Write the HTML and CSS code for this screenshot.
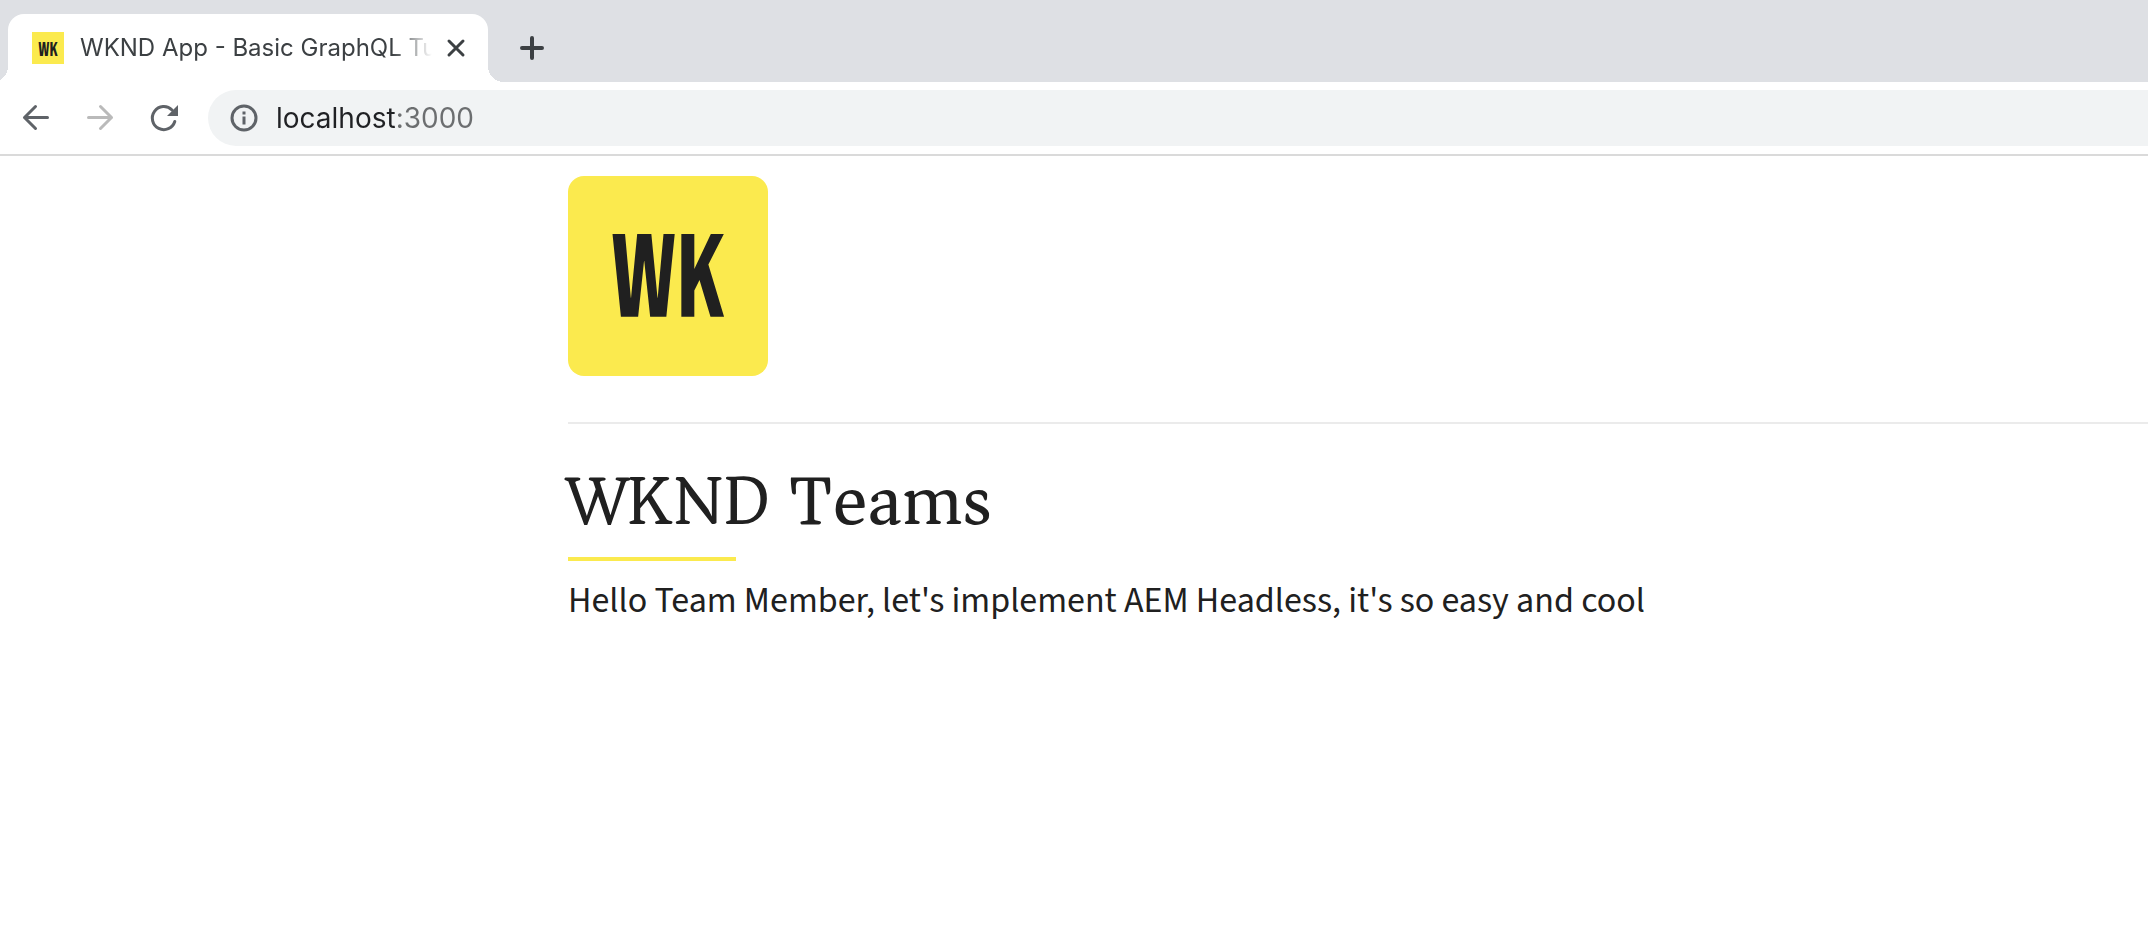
FILE: index.html
```html
<!DOCTYPE html>
<html lang="en">
<head>
<meta charset="utf-8">
<meta name="viewport" content="width=device-width, initial-scale=1">
<title>WKND App - Basic GraphQL Tutorial</title>
<link rel="stylesheet" href="styles.css">
</head>
<body>
<header class="browser">
  <div class="tab-strip">
    <div class="tab">
      <svg class="favicon" viewBox="0 0 32 32" aria-hidden="true">
        <rect width="32" height="32" fill="#fbea4e"/>
        <text class="logo-letters" x="16" y="24" font-size="20" text-anchor="middle">WK</text>
      </svg>
      <span class="tab-title">WKND App - Basic GraphQL Tu</span>
      <button class="icon-button close" type="button" aria-label="Close tab">
        <svg width="20" height="20" viewBox="0 0 20 20" aria-hidden="true"><path d="M3 3l14 14M17 3L3 17" fill="none" stroke="#3c4043" stroke-width="3" stroke-linecap="round"/></svg>
      </button>
    </div>
    <button class="icon-button new-tab" type="button" aria-label="New tab">
      <svg width="24" height="24" viewBox="0 0 24 24" aria-hidden="true"><path d="M12 2v20M2 12h20" fill="none" stroke="#3c4043" stroke-width="4" stroke-linecap="round"/></svg>
    </button>
  </div>
  <div class="toolbar">
    <button class="icon-button nav" type="button" aria-label="Back">
      <svg width="32" height="32" viewBox="0 0 32 32" aria-hidden="true"><path d="M27.500 15.500h-23M15.500 4.500l-11 11 11 11" fill="none" stroke="#5f6368" stroke-width="3" stroke-linecap="round" stroke-linejoin="round"/></svg>
    </button>
    <button class="icon-button nav" type="button" aria-label="Forward">
      <svg width="32" height="32" viewBox="0 0 32 32" aria-hidden="true"><path d="M4.500 15.500h23M16.500 4.500l11 11-11 11" fill="none" stroke="#bababa" stroke-width="3" stroke-linecap="round" stroke-linejoin="round"/></svg>
    </button>
    <button class="icon-button nav" type="button" aria-label="Reload">
      <svg width="32" height="32" viewBox="0 0 32 32" aria-hidden="true"><path d="M26.800 19.500A11.500 11.500 0 1 1 24 8" fill="none" stroke="#5f6368" stroke-width="3" stroke-linecap="round"/><path d="M30 3v11H19z" fill="#5f6368"/></svg>
    </button>
    <div class="address-bar">
      <svg width="28" height="28" viewBox="0 0 28 28" aria-hidden="true"><circle cx="14" cy="14" r="12" fill="none" stroke="#5f6368" stroke-width="3"/><path d="M12.500 7.500h3v3h-3zM12.500 12.500h3v8h-3z" fill="#5f6368"/></svg>
      <input class="address" type="text" aria-label="Address" value="localhost:3000">
    </div>
  </div>
</header>
<main class="page">
  <div class="site-header">
    <svg class="logo" viewBox="0 0 200 200" role="img" aria-label="WK">
      <rect width="200" height="200" rx="16" fill="#fbea4e"/>
      <text class="logo-letters" x="100" y="141" font-size="118" text-anchor="middle">WK</text>
    </svg>
  </div>
  <h1 class="title">WKND Teams</h1>
  <p class="message">Hello Team Member, let's implement AEM Headless, it's so easy and cool</p>
</main>
</body>
</html>
```

FILE: styles.css
```css
* {
  box-sizing: border-box;
}

body {
  margin: 0;
  background: #fff;
  color: #202020;
  font-family: "Source Sans Pro", "Source Sans 3", "Noto Sans CJK SC", "Noto Sans", sans-serif;
}

.tab-strip {
  display: flex;
  align-items: flex-end;
  height: 82px;
  padding-left: 8px;
  background: #dee0e4;
}

.tab {
  position: relative;
  display: flex;
  align-items: center;
  width: 480px;
  height: 68px;
  padding: 0 20px 0 24px;
  border-radius: 16px 16px 0 0;
  background: #fff;
}

.tab::before,
.tab::after {
  content: "";
  position: absolute;
  bottom: 0;
  width: 16px;
  height: 16px;
}

.tab::before {
  right: 100%;
  background: radial-gradient(circle at 0 0, #dee0e4 16px, #fff 16px);
}

.tab::after {
  left: 100%;
  background: radial-gradient(circle at 100% 0, #dee0e4 16px, #fff 16px);
}

.favicon {
  flex: none;
  width: 32px;
  height: 32px;
  margin-right: 16px;
}

.tab-title {
  flex: 1;
  min-width: 0;
  color: #3c4043;
  font: 24px/32px Inter, "Liberation Sans", sans-serif;
  white-space: nowrap;
  mask-image: linear-gradient(to left, transparent, #000 40px);
}

.icon-button {
  display: grid;
  place-items: center;
  padding: 0;
  border: 0;
  background: none;
}

.close {
  width: 24px;
  height: 24px;
  margin-left: 12px;
}

.new-tab {
  width: 48px;
  height: 68px;
  margin-left: 20px;
}

.toolbar {
  display: flex;
  align-items: center;
  gap: 32px;
  height: 74px;
  padding-left: 20px;
  border-bottom: 2px solid #dadada;
}

.nav {
  width: 32px;
  height: 32px;
}

.address-bar {
  display: flex;
  flex: 1;
  align-items: center;
  gap: 18px;
  height: 56px;
  margin-left: -4px;
  padding-left: 22px;
  border-radius: 28px 0 0 28px;
  background: #f1f3f4;
}

.address {
  flex: 1;
  min-width: 0;
  height: 40px;
  padding: 0;
  border: 0;
  outline: 0;
  color: #202124;
  background: linear-gradient(to right, #202124 120px, #6c6e70 120px);
  background-clip: text;
  font: 28px/40px Inter, "Liberation Sans", sans-serif;
  -webkit-text-fill-color: transparent;
}

.page {
  padding: 20px 0 0 568px;
}

.site-header {
  padding-bottom: 46px;
  border-bottom: 2px solid #ebebeb;
}

.logo {
  display: block;
  width: 200px;
  height: 200px;
}

.logo-letters {
  fill: #202020;
  font-family: "Bebas Neue", "Liberation Sans Narrow", Roboto, sans-serif;
  font-weight: 400;
}

.title {
  margin: 37px 0 0;
  font: 400 72px/80px Asar, "Source Serif 4", "Liberation Serif", serif;
}

.title::after {
  content: "";
  display: block;
  width: 168px;
  height: 4px;
  margin-top: 16px;
  background: #fbea4e;
}

.message {
  margin: 16px 0 0;
  font-size: 36px;
  line-height: 48px;
}
```
